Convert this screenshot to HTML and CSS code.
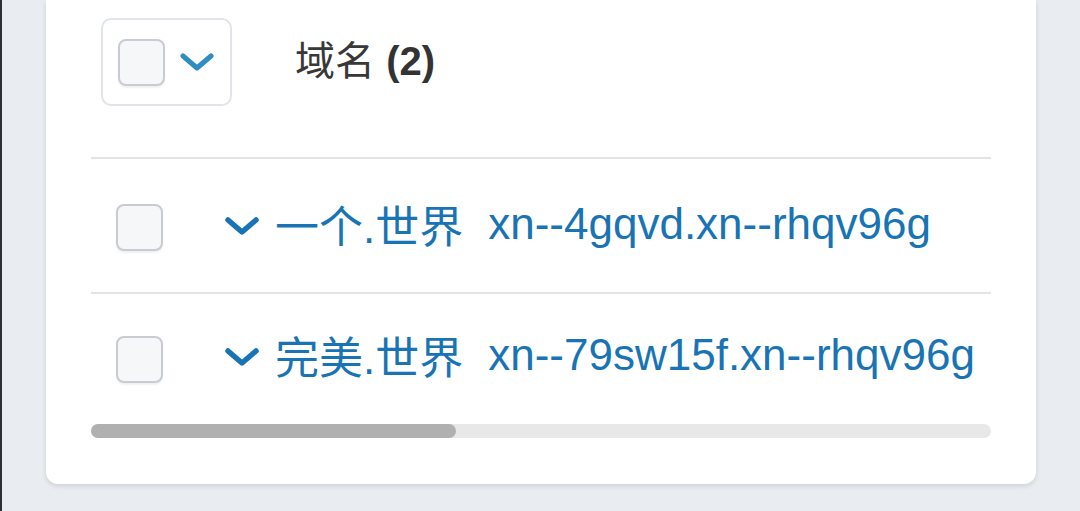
FILE: index.html
```html
<!DOCTYPE html>
<html lang="zh">
<head>
    <meta charset="UTF-8">
    <meta name="viewport" content="width=device-width, initial-scale=1.0">
    <title>域名</title>
    <link rel="stylesheet" href="styles.css">
</head>
<body>
    <div class="card">
        <div class="table-head">
            <div class="select-all">
                <span class="checkbox"></span>
                <svg class="chevron head-chevron" viewBox="0 0 36 18" width="36" height="18">
                    <path d="M4 3 L18 15 L32 3" fill="none" stroke="currentColor" stroke-width="5" stroke-linecap="round" stroke-linejoin="round"/>
                </svg>
            </div>
            <div class="head-title">域名 <b>(2)</b></div>
        </div>

        <div class="row">
            <span class="checkbox"></span>
            <svg class="chevron" viewBox="0 0 36 18" width="36" height="18">
                <path d="M4 3 L18 15 L32 3" fill="none" stroke="currentColor" stroke-width="5.5" stroke-linecap="round" stroke-linejoin="round"/>
            </svg>
            <span class="domain">一个.世界</span>
            <span class="punycode">xn--4gqvd.xn--rhqv96g</span>
        </div>

        <div class="row row-last">
            <span class="checkbox"></span>
            <svg class="chevron" viewBox="0 0 36 18" width="36" height="18">
                <path d="M4 3 L18 15 L32 3" fill="none" stroke="currentColor" stroke-width="5.5" stroke-linecap="round" stroke-linejoin="round"/>
            </svg>
            <span class="domain">完美.世界</span>
            <span class="punycode">xn--79sw15f.xn--rhqv96g</span>
        </div>

        <div class="scrollbar">
            <div class="scroll-thumb"></div>
        </div>
    </div>
</body>
</html>
```

FILE: styles.css
```css
body {
    margin: 0;
    background-color: #e9ecf0;
    border-left: 2px solid #2d2f33;
    font-family: 'Liberation Sans', 'Noto Sans CJK SC', sans-serif;
    height: 511px;
    box-sizing: border-box;
    overflow: hidden;
}

.card {
    margin-left: 44px;
    width: 990px;
    background-color: #fff;
    border-radius: 0 0 12px 12px;
    box-shadow: 0 2px 5px rgba(0, 0, 0, 0.12);
    padding: 0 45px 46px;
    box-sizing: border-box;
}

.table-head {
    display: flex;
    align-items: center;
    padding: 18px 0 51px 10px;
    border-bottom: 2px solid #e2e3e5;
}

.select-all {
    display: flex;
    align-items: center;
    width: 131px;
    height: 88px;
    box-sizing: border-box;
    border: 2px solid #e1e4e8;
    border-radius: 10px;
    padding-left: 15px;
}

.checkbox {
    display: block;
    width: 47px;
    height: 47px;
    box-sizing: border-box;
    border: 2px solid #c8ccd2;
    border-radius: 8px;
    background-color: #f6f7f9;
    box-shadow: 0 2px 2px rgba(0, 0, 0, 0.06);
    flex-shrink: 0;
}

.chevron {
    display: block;
    color: #1874b4;
    flex-shrink: 0;
}

.head-chevron {
    color: #2f8dc2;
    margin-left: 14px;
}

.head-title {
    margin-left: 63px;
    margin-bottom: 8px;
    font-size: 40px;
    color: #383838;
}

.head-title b {
    font-weight: 600;
    color: #333;
}

.row {
    display: flex;
    align-items: center;
    height: 129px;
    padding-top: 4px;
    padding-left: 25px;
    border-bottom: 2px solid #e2e3e5;
}

.row-last {
    border-bottom: none;
    height: 122px;
    padding-bottom: 4px;
}

.row .chevron {
    margin-left: 61px;
    margin-bottom: 4px;
}

.domain {
    margin-left: 15px;
    margin-bottom: 8px;
    font-size: 44px;
    color: #1874b4;
}

.punycode {
    margin-left: 25px;
    margin-bottom: 8px;
    font-size: 44px;
    color: #1874b4;
}

.scrollbar {
    height: 14px;
    border-radius: 7px;
    background-color: #e8e8e8;
}

.scroll-thumb {
    width: 365px;
    height: 14px;
    border-radius: 7px;
    background-color: #b0b0b0;
}
```
